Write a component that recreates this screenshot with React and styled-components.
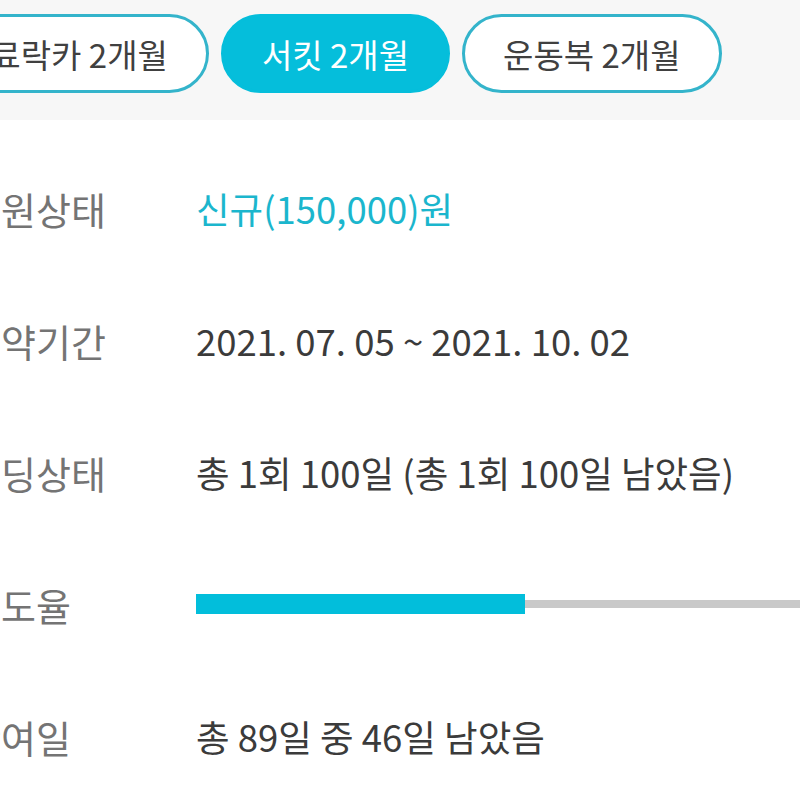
import React from "react";
import styled, { createGlobalStyle } from "styled-components";

const GlobalStyle = createGlobalStyle`
  html, body {
    margin: 0;
    padding: 0;
    background: #ffffff;
    overflow: hidden;
  }
  body {
    font-family: "Noto Sans CJK KR", "Noto Sans", sans-serif;
  }
`;

const Page = styled.div`
  width: 800px;
  overflow: hidden;
`;

const TabBar = styled.div`
  background-color: #f7f7f7;
  height: 120px;
  box-sizing: border-box;
  padding-top: 14px;
  display: flex;
  flex-direction: row;
  gap: 12px;
  margin-left: -81px;
  width: 1000px;
`;

const Tab = styled.div`
  height: 79px;
  box-sizing: border-box;
  padding: 0 38px;
  border-radius: 40px;
  border: 3px solid ${(p) => (p.active ? "#05bedb" : "#34b4cb")};
  background-color: ${(p) => (p.active ? "#05bedb" : "#ffffff")};
  color: ${(p) => (p.active ? "#ffffff" : "#404040")};
  font-size: 33px;
  display: flex;
  align-items: center;
  white-space: nowrap;
`;

const Info = styled.div`
  padding-top: 22px;
  margin-left: -34px;
  width: 1000px;
`;

const Row = styled.div`
  height: 132px;
  display: flex;
  flex-direction: row;
  align-items: center;
`;

const Label = styled.div`
  width: 230px;
  flex-shrink: 0;
  font-size: 38px;
  color: #747474;
  white-space: nowrap;
`;

const Value = styled.div`
  font-size: 36.5px;
  color: ${(p) => (p.accent ? "#1bb6cd" : "#3b3b3b")};
  white-space: nowrap;
`;

const Track = styled.div`
  width: 681px;
  height: 20px;
  display: flex;
  align-items: center;
  position: relative;
`;

const TrackLine = styled.div`
  width: 100%;
  height: 8px;
  background-color: #c9c9c9;
`;

const Fill = styled.div`
  position: absolute;
  left: 0;
  top: 0;
  height: 20px;
  background-color: #02bedb;
`;

const tabs = [
  { name: "유료락카 2개월" },
  { name: "서킷 2개월", active: true },
  { name: "운동복 2개월" },
];

export default function App() {
  const total = 89;
  const left = 46;
  const pct = ((total - left) / total) * 100;

  return (
    <Page>
      <GlobalStyle />
      <TabBar>
        {tabs.map((t) => (
          <Tab key={t.name} active={t.active}>
            {t.name}
          </Tab>
        ))}
      </TabBar>
      <Info>
        <Row>
          <Label>회원상태</Label>
          <Value accent>신규(150,000)원</Value>
        </Row>
        <Row>
          <Label>계약기간</Label>
          <Value>2021. 07. 05 ~ 2021. 10. 02</Value>
        </Row>
        <Row>
          <Label>홀딩상태</Label>
          <Value>총 1회 100일 (총 1회 100일 남았음)</Value>
        </Row>
        <Row>
          <Label>진도율</Label>
          <Track>
            <TrackLine />
            <Fill style={{ width: `${pct}%` }} />
          </Track>
        </Row>
        <Row>
          <Label>잔여일</Label>
          <Value>
            총 {total}일 중 {left}일 남았음
          </Value>
        </Row>
      </Info>
    </Page>
  );
}
